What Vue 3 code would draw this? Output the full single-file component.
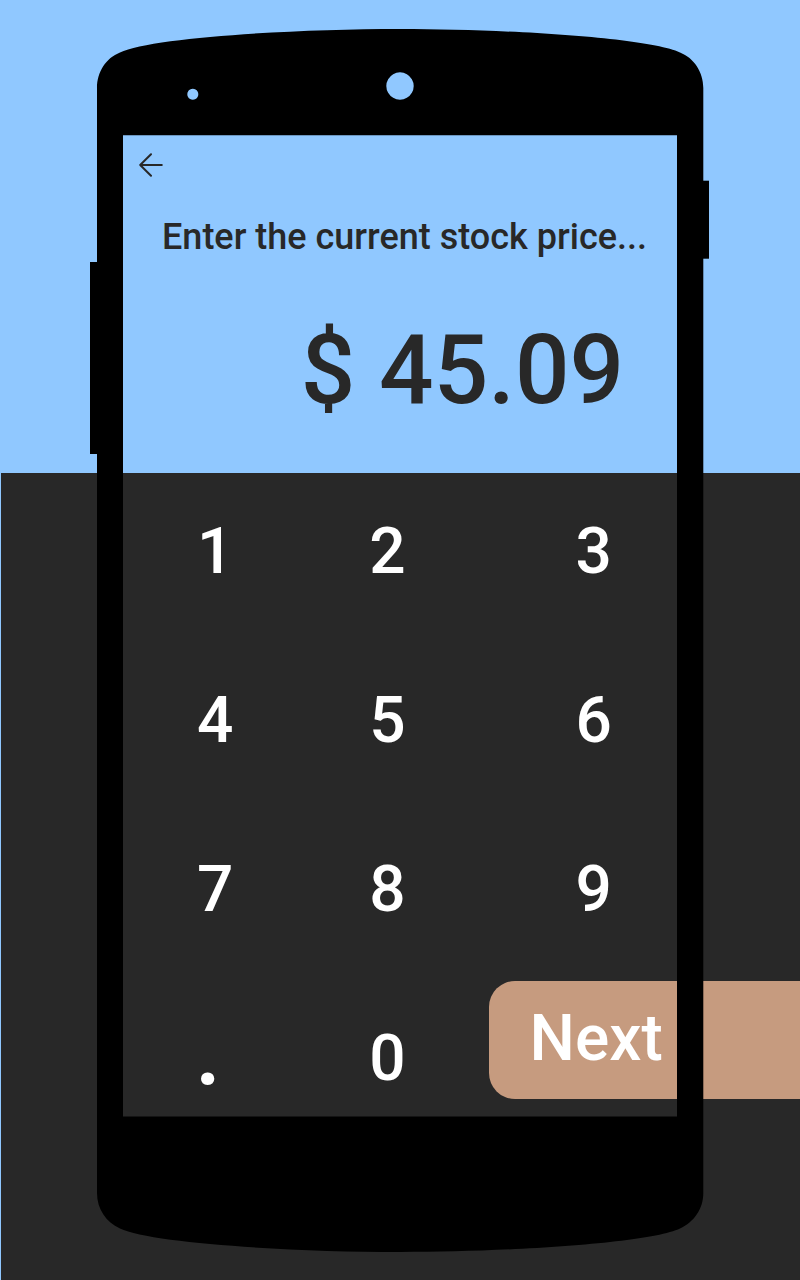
<script setup>
import { ref } from 'vue'

const digits = ['1', '2', '3', '4', '5', '6', '7', '8', '9']
const price = ref('45.09')

function press(key) {
  if (key === '.' && price.value.includes('.')) return
  price.value += key
}

function back() {
  price.value = price.value.slice(0, -1)
}
</script>

<template>
  <main class="page">
    <header class="top">
      <button class="back" type="button" aria-label="Back" @click="back">
        <svg viewBox="0 0 24 24" width="24" height="24" aria-hidden="true">
          <path d="M12 1.200 L1.200 12 L12 22.800 M1.200 12 H22.800" />
        </svg>
      </button>
      <h1 id="prompt" class="prompt">Enter the current stock price...</h1>
      <output class="price" aria-labelledby="prompt">$ {{ price }}</output>
    </header>

    <section class="keypad" aria-label="Keypad">
      <button v-for="d in digits" :key="d" class="key" type="button" @click="press(d)">{{ d }}</button>
      <button class="key point" type="button" @click="press('.')">.</button>
      <button class="key" type="button" @click="press('0')">0</button>
      <button class="next" type="button">Next</button>
    </section>

    <svg class="phone" viewBox="0 0 800 1280" aria-hidden="true">
      <path
        fill-rule="evenodd"
        d="M97 88 C97 72 106 58 120 52.500 C150 38 290 29 400 29 C510 29 650 38 680 52.500 C694 58 703.300 72 703.300 88
           V1193 C703.300 1209 694 1222 680 1228.500 C650 1243 510 1252 400 1252 C290 1252 150 1243 120 1228.500 C106 1222 97 1209 97 1193 Z
           M123 135.300 V1116.500 H677 V135.300 Z
           M400 72.300 a13.700 13.700 0 1 0 0.010 0 Z
           M192.800 88.800 a5.500 5.500 0 1 0 0.010 0 Z"
      />
      <rect x="90" y="262" width="10" height="192" />
      <rect x="700" y="180.700" width="9" height="78" />
    </svg>
  </main>
</template>

<style>
body {
  margin: 0;
  background: #90c8ff;
}
</style>

<style scoped>
.page {
  position: relative;
  display: flex;
  flex-direction: column;
  min-height: 100vh;
  overflow: hidden;
  background: #90c8ff;
  color: #282828;
  font-family: Roboto, "Liberation Sans", sans-serif;
  font-weight: 500;
}

.top {
  display: flex;
  flex-direction: column;
  padding: 153px 139px 47px;
}

button {
  padding: 0;
  border: 0;
  background: none;
  font: inherit;
  cursor: pointer;
}

.back {
  width: 24px;
  height: 24px;
}

.back svg {
  display: block;
  fill: none;
  stroke: #282828;
  stroke-width: 2;
  stroke-linecap: round;
  stroke-linejoin: round;
}

.prompt {
  margin: 39px 0 56px 23px;
  margin-right: -20px;
  font-size: 36px;
  font-weight: 500;
  line-height: 42px;
  white-space: nowrap;
}

.price {
  margin-right: 37px;
  font-size: 96px;
  line-height: 112px;
  text-align: right;
  white-space: nowrap;
}

.keypad {
  flex: 1;
  display: grid;
  grid-template-columns: 172fr 172fr 240fr 86fr;
  grid-template-rows: repeat(4, 82px);
  row-gap: 87px;
  margin-left: 1px;
  padding: 38px 0 95px 128px;
  background: #282828;
  color: #ffffff;
}

.key {
  color: inherit;
  font-size: 64px;
  line-height: 82px;
}

.key:nth-child(3n + 1) {
  grid-column: 1;
}

.point {
  align-self: start;
  padding-right: 14px;
  font-size: 96px;
  line-height: 66px;
}

.next {
  grid-column: 3 / -1;
  align-self: end;
  height: 118px;
  margin: -37px 0 1px 15px;
  padding: 0 0 2px 41px;
  border-radius: 26px 0 0 26px;
  background: #c69b7f;
  color: #ffffff;
  font-size: 64px;
  line-height: 76px;
  text-align: left;
}

.phone {
  position: absolute;
  top: 0;
  left: 0;
  width: 100%;
  pointer-events: none;
}
</style>
